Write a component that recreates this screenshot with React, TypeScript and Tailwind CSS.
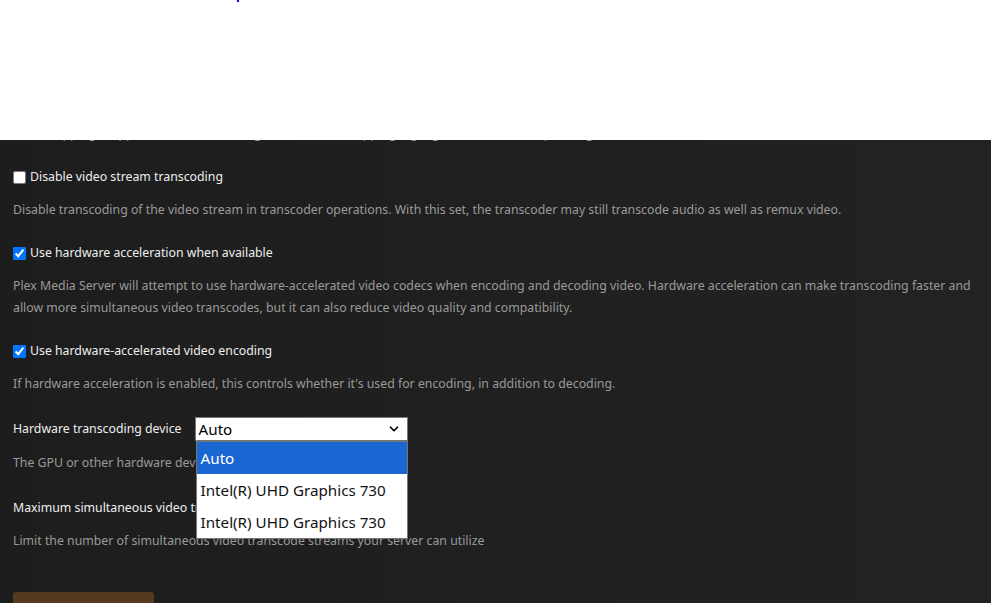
import { ChevronDown } from "lucide-react";

const font = { fontFamily: '"Segoe UI", "Noto Sans", sans-serif' };

function CheckRow({ label, checked }: { label: string; checked?: boolean }) {
  return (
    <label className="flex items-center gap-[4px] text-[12.3px] leading-[22px] text-[#eeeeee]">
      <input type="checkbox" defaultChecked={checked} className="m-0 h-[13px] w-[13px] accent-[#0075ff]" />
      <span>{label}</span>
    </label>
  );
}

function Desc({ children }: { children: React.ReactNode }) {
  return <p className="text-[12.3px] leading-[22px] text-[#9a9a9a]">{children}</p>;
}

export default function App() {
  return (
    <div className="h-[603px] w-[991px] overflow-hidden bg-white" style={font}>
      {/* white header strip */}
      <div className="relative h-[140px] bg-white">
        <div className="absolute left-[237px] top-0 h-[2px] w-[2px] bg-[#0000ff]" />
      </div>

      <div className="relative h-[463px] overflow-hidden bg-gradient-to-r from-[#1d1d1d] via-[#202020] to-[#222222] px-[13px]">
        <div className="-mt-[17px]">
          <Desc>Tone mapping is applied when transcoding HDR content, mapping highlights to the SDR output range.</Desc>
        </div>

        <div className="mt-[21px]">
          <CheckRow label="Disable video stream transcoding" />
        </div>
        <div className="mt-[11px]">
          <Desc>
            Disable transcoding of the video stream in transcoder operations. With this set, the transcoder may still transcode audio as well as remux video.
          </Desc>
        </div>

        <div className="mt-[21px]">
          <CheckRow label="Use hardware acceleration when available" checked />
        </div>
        <div className="mt-[11px]">
          <Desc>
            Plex Media Server will attempt to use hardware-accelerated video codecs when encoding and decoding video. Hardware acceleration can make transcoding faster and allow more simultaneous video transcodes, but it can also reduce video quality and compatibility.
          </Desc>
        </div>

        <div className="mt-[21px]">
          <CheckRow label="Use hardware-accelerated video encoding" checked />
        </div>
        <div className="mt-[11px]">
          <Desc>If hardware acceleration is enabled, this controls whether it's used for encoding, in addition to decoding.</Desc>
        </div>

        <div className="relative mt-[22px] flex items-center gap-[13px]">
          <span className="text-[12.3px] leading-[22px] text-[#eeeeee]">Hardware transcoding device</span>
          <div className="relative">
            <div className="flex h-[24px] w-[213px] items-center justify-between border border-[#767676] bg-white pl-[3px] pr-[6px] text-[15.2px] text-black">
              <span>Auto</span>
              <ChevronDown className="h-[14px] w-[14px]" strokeWidth={3} />
            </div>
            {/* open select list */}
            <div className="absolute left-[1px] top-[24px] z-10 w-[212px] border border-[#767676] bg-white text-[15.2px] text-[#111111]">
              <div className="flex h-[32px] items-center bg-[#1a66d2] px-[4px] text-white">Auto</div>
              <div className="flex h-[32px] items-center px-[4px]">Intel(R) UHD Graphics 730</div>
              <div className="flex h-[32px] items-center px-[4px]">Intel(R) UHD Graphics 730</div>
            </div>
          </div>
        </div>
        <div className="mt-[11px]">
          <Desc>The GPU or other hardware device to use.</Desc>
        </div>

        <div className="mt-[23px] text-[12.3px] leading-[22px] text-[#eeeeee]">Maximum simultaneous video transcodes</div>
        <div className="mt-[11px]">
          <Desc>Limit the number of simultaneous video transcode streams your server can utilize</Desc>
        </div>

        <div className="mt-[40px] h-[36px] w-[141px] rounded-[3px] bg-[#553b1e]" />
      </div>
    </div>
  );
}
